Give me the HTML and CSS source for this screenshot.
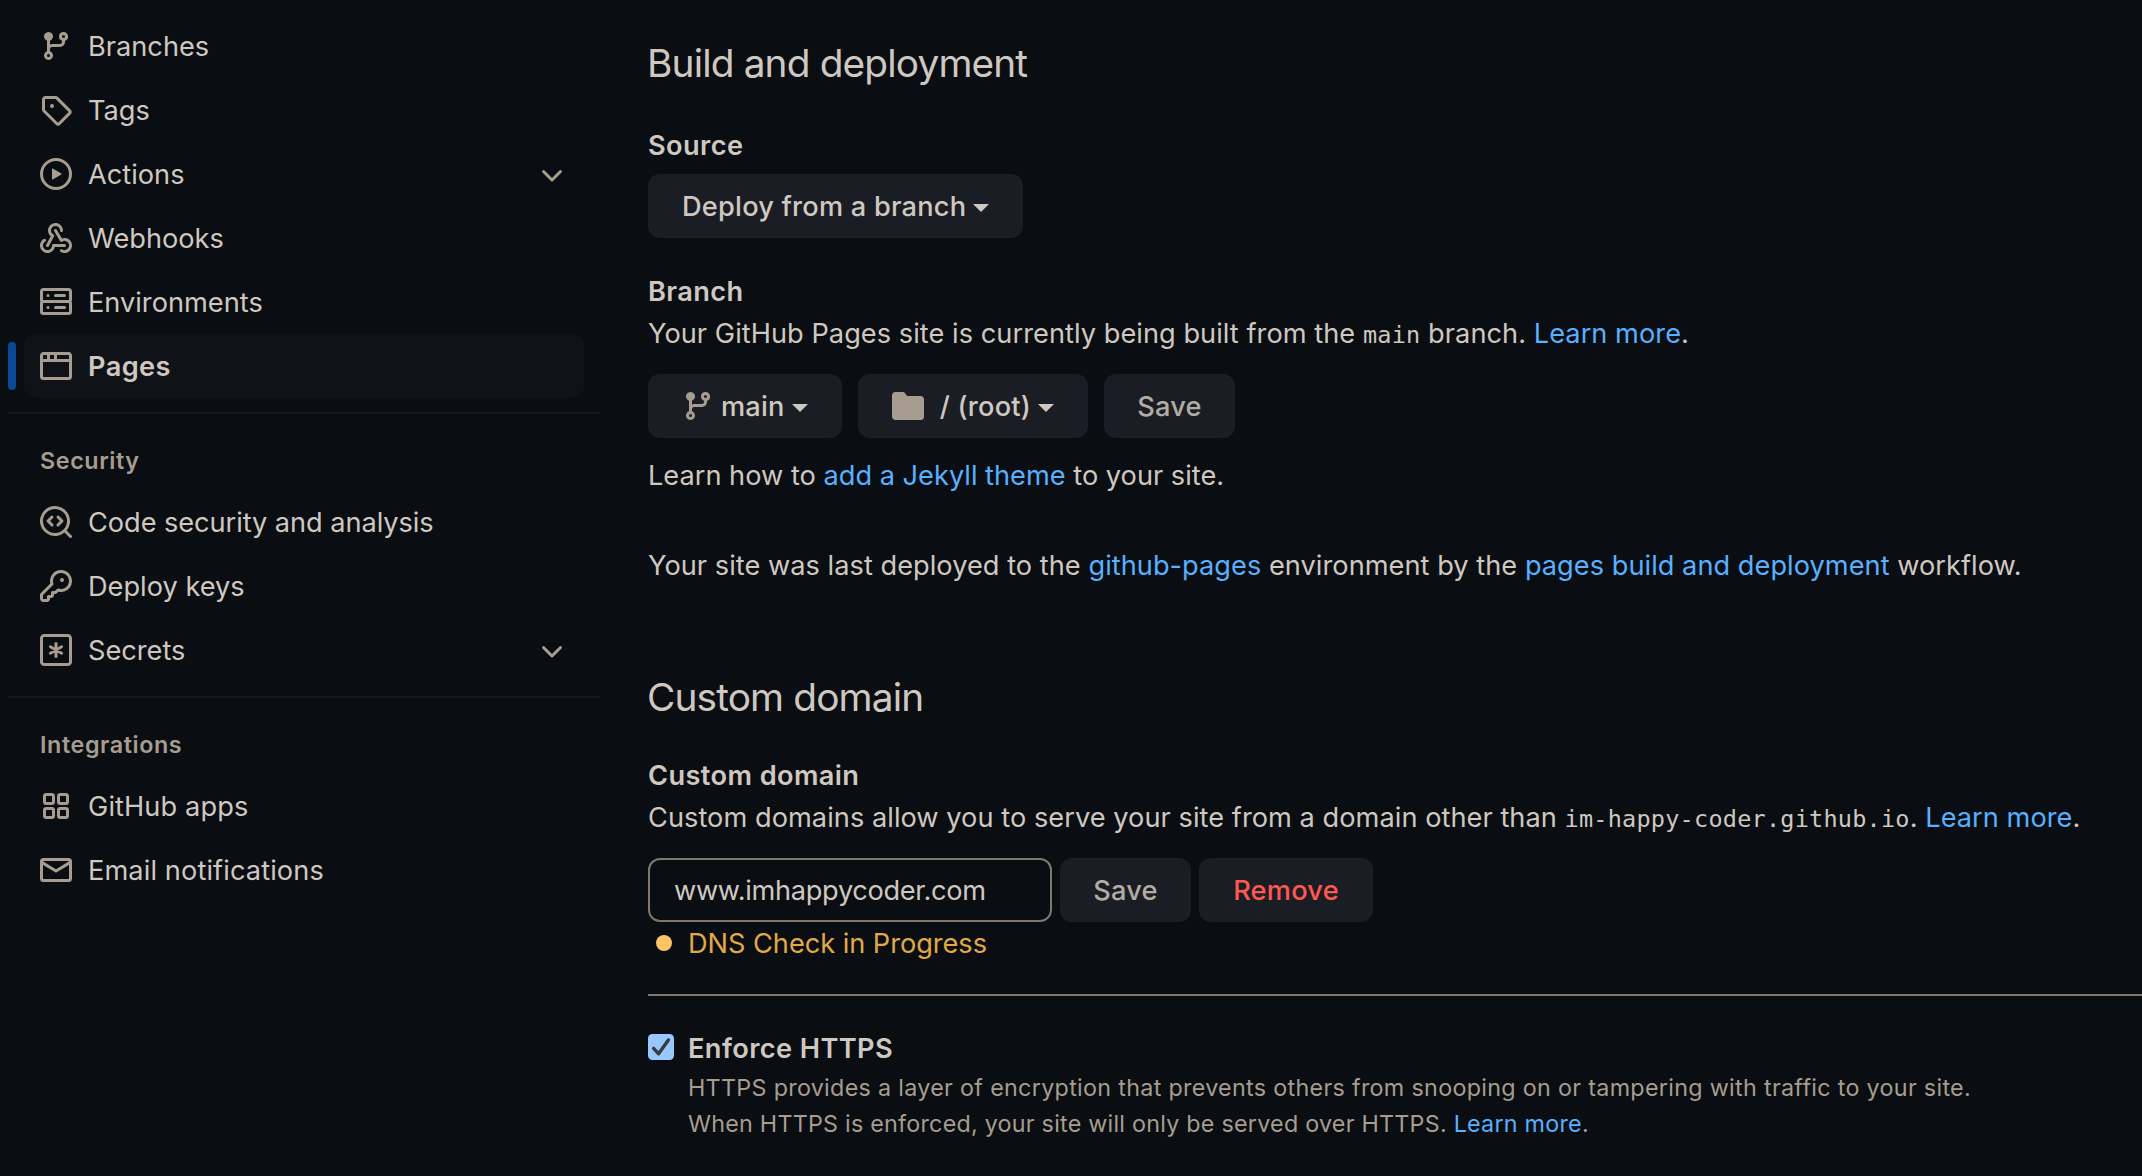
FILE: index.html
```html
<!DOCTYPE html>
<html lang="en">
<head>
<meta charset="utf-8">
<title>Pages settings</title>
<link rel="stylesheet" href="styles.css">
</head>
<body>
<div class="page">
  <nav class="sidebar">
    <ul class="nav-list">
      <li class="nav-item"><svg class="icon" viewBox="0 0 16 16"><path d="M11.75 2.5a.75.75 0 100 1.5.75.75 0 000-1.5zm-2.25.75a2.25 2.25 0 113 2.122V6A2.5 2.5 0 0110 8.5H6a1 1 0 00-1 1v1.128a2.251 2.251 0 11-1.5 0V5.372a2.25 2.25 0 111.5 0v1.836A2.492 2.492 0 016 7h4a1 1 0 001-1v-.628A2.25 2.25 0 019.5 3.25zM4.25 12a.75.75 0 100 1.5.75.75 0 000-1.5zM3.5 3.25a.75.75 0 111.5 0 .75.75 0 01-1.5 0z"/></svg><span>Branches</span></li>
      <li class="nav-item"><svg class="icon" viewBox="0 0 16 16"><path fill-rule="evenodd" d="M2.5 7.775V2.75a.25.25 0 01.25-.25h5.025a.25.25 0 01.177.073l6.25 6.25a.25.25 0 010 .354l-5.025 5.025a.25.25 0 01-.354 0l-6.25-6.25a.25.25 0 01-.073-.177zm-1.5 0V2.75C1 1.784 1.784 1 2.75 1h5.025c.464 0 .91.184 1.238.513l6.25 6.25a1.75 1.75 0 010 2.474l-5.026 5.026a1.75 1.75 0 01-2.474 0l-6.25-6.25A1.75 1.75 0 011 7.775zM6 5a1 1 0 100 2 1 1 0 000-2z"/></svg><span>Tags</span></li>
      <li class="nav-item"><svg class="icon" viewBox="0 0 16 16"><path d="M1.5 8a6.5 6.5 0 1113 0 6.5 6.5 0 01-13 0zM8 0a8 8 0 100 16A8 8 0 008 0zM6.379 5.227A.25.25 0 006 5.442v5.117a.25.25 0 00.379.214l4.264-2.559a.25.25 0 000-.428L6.379 5.227z"/></svg><span>Actions</span><svg class="icon chevron" viewBox="0 0 16 16"><path d="M12.78 6.22a.75.75 0 010 1.06l-4.25 4.25a.75.75 0 01-1.06 0L3.22 7.28a.75.75 0 011.06-1.06L8 9.94l3.72-3.72a.75.75 0 011.06 0z"/></svg></li>
      <li class="nav-item"><svg class="icon" viewBox="0 0 16 16"><path d="M5.5 4.25a2.25 2.25 0 014.5 0 .75.75 0 001.5 0 3.75 3.75 0 10-6.14 2.889l-2.272 4.258a.75.75 0 001.324.706L7 7.25a.75.75 0 00-.309-1.015A2.25 2.25 0 015.5 4.25z"/><path d="M7.364 3.607a.75.75 0 011.03.257l2.608 4.349a3.75 3.75 0 11-.628 6.785.75.75 0 01.752-1.299 2.25 2.25 0 10-.033-3.88.75.75 0 01-1.03-.256L7.107 4.636a.75.75 0 01.257-1.03z"/><path d="M2.9 8.776A.75.75 0 012.625 9.8 2.25 2.25 0 106 11.75a.75.75 0 01.75-.751h5.5a.75.75 0 010 1.5H7.425a3.751 3.751 0 11-5.55-3.998.75.75 0 011.024.274z"/></svg><span>Webhooks</span></li>
      <li class="nav-item"><svg class="icon line" viewBox="0 0 16 16"><rect x=".75" y="1.75" width="14.5" height="6" rx="1"/><rect x=".75" y="7.75" width="14.5" height="6" rx="1"/><path d="M4 4.75h.01M7.75 4.75h4.5M4 10.75h.01M7.75 10.75h4.5"/></svg><span>Environments</span></li>
      <li class="nav-item selected"><svg class="icon" viewBox="0 0 16 16"><path d="M0 2.75C0 1.784.784 1 1.75 1h12.5c.966 0 1.75.784 1.75 1.75v10.5A1.75 1.75 0 0114.25 15H1.75A1.75 1.75 0 010 13.25V2.75zm1.75-.25a.25.25 0 00-.25.25V4.5h2v-2H1.75zM5 2.5v2h2v-2H5zm3.5 0v2h6V2.75a.25.25 0 00-.25-.25H8.5zm6 3.5h-13v7.25c0 .138.112.25.25.25h12.5a.25.25 0 00.25-.25V6z"/></svg><span>Pages</span></li>
    </ul>
    <h3 class="group-title">Security</h3>
    <ul class="nav-list">
      <li class="nav-item tight"><svg class="icon" viewBox="0 0 16 16"><path d="M8.47 4.97a.75.75 0 000 1.06L9.94 7.5 8.47 8.97a.75.75 0 101.06 1.06l2-2a.75.75 0 000-1.06l-2-2a.75.75 0 00-1.06 0zM6.53 6.03a.75.75 0 00-1.06-1.06l-2 2a.75.75 0 000 1.06l2 2a.75.75 0 101.06-1.06L5.06 7.5l1.47-1.47z"/><path fill-rule="evenodd" d="M12.246 13.307a7.5 7.5 0 111.06-1.06l2.474 2.473a.75.75 0 11-1.06 1.06l-2.474-2.473zM1.5 7.5a6 6 0 1112 0 6 6 0 01-12 0z"/></svg><span>Code security and analysis</span></li>
      <li class="nav-item"><svg class="icon" viewBox="0 0 16 16"><path fill-rule="evenodd" d="M6.5 5.5a4 4 0 112.731 3.795.75.75 0 00-.768.18L7.44 10.5H6.25a.75.75 0 00-.75.75v1.19l-.06.06H4.25a.75.75 0 00-.75.75v1.19l-.06.06H1.75a.25.25 0 01-.25-.25v-1.69l5.024-5.023a.75.75 0 00.181-.768A3.995 3.995 0 016.5 5.5zm4-5.5a5.5 5.5 0 00-5.348 6.788L.22 11.72a.75.75 0 00-.22.53v2C0 15.216.784 16 1.75 16h2a.75.75 0 00.53-.22l.5-.5a.75.75 0 00.22-.53V14h.75a.75.75 0 00.53-.22l.5-.5a.75.75 0 00.22-.53V12h.75a.75.75 0 00.53-.22l.932-.932A5.5 5.5 0 1010.5 0zm.5 6a1 1 0 100-2 1 1 0 000 2z"/></svg><span>Deploy keys</span></li>
      <li class="nav-item"><svg class="icon line" viewBox="0 0 16 16"><rect x=".75" y=".75" width="14.5" height="14.5" rx="1.4"/><path d="M8 4.75v6.5M5.2 6.4l5.6 3.2M5.2 9.6l5.6-3.2"/></svg><span>Secrets</span><svg class="icon chevron" viewBox="0 0 16 16"><path d="M12.78 6.22a.75.75 0 010 1.06l-4.25 4.25a.75.75 0 01-1.06 0L3.22 7.28a.75.75 0 011.06-1.06L8 9.94l3.72-3.72a.75.75 0 011.06 0z"/></svg></li>
    </ul>
    <h3 class="group-title">Integrations</h3>
    <ul class="nav-list">
      <li class="nav-item loose"><svg class="icon line" viewBox="0 0 16 16"><rect x="2.25" y="2.25" width="4.5" height="4.5" rx=".9"/><rect x="9.25" y="2.25" width="4.5" height="4.5" rx=".9"/><rect x="2.25" y="9.25" width="4.5" height="4.5" rx=".9"/><rect x="9.25" y="9.25" width="4.5" height="4.5" rx=".9"/></svg><span>GitHub apps</span></li>
      <li class="nav-item loose"><svg class="icon line" viewBox="0 0 16 16"><rect x=".75" y="2.75" width="14.5" height="10.5" rx="1"/><path d="M.9 4.2L8 8.5l7.1-4.3"/></svg><span>Email notifications</span></li>
    </ul>
  </nav>

  <main class="content">
    <section class="build">
      <h2 class="title">Build and deployment</h2>
      <h4 class="label source">Source</h4>
      <button class="btn menu"><span>Deploy from a branch</span><i class="caret"></i></button>
      <h4 class="label branch">Branch</h4>
      <p class="text">Your GitHub Pages site is currently being built from the <code>main</code> branch. <a>Learn more</a>.</p>
      <div class="branch-row">
        <button class="btn menu"><svg class="icon" viewBox="0 0 16 16"><path d="M11.75 2.5a.75.75 0 100 1.5.75.75 0 000-1.5zm-2.25.75a2.25 2.25 0 113 2.122V6A2.5 2.5 0 0110 8.5H6a1 1 0 00-1 1v1.128a2.251 2.251 0 11-1.5 0V5.372a2.25 2.25 0 111.5 0v1.836A2.492 2.492 0 016 7h4a1 1 0 001-1v-.628A2.25 2.25 0 019.5 3.25zM4.25 12a.75.75 0 100 1.5.75.75 0 000-1.5zM3.5 3.25a.75.75 0 111.5 0 .75.75 0 01-1.5 0z"/></svg><span>main</span><i class="caret"></i></button>
        <button class="btn menu folder"><svg class="icon" viewBox="0 0 16 16"><path d="M1.75 1A1.75 1.75 0 000 2.75v10.5C0 14.216.784 15 1.75 15h12.5A1.75 1.75 0 0016 13.25v-8.5A1.75 1.75 0 0014.25 3h-6.5a.25.25 0 01-.2-.1l-.9-1.2c-.33-.44-.85-.7-1.4-.7h-3.5z"/></svg><span>/ (root)</span><i class="caret"></i></button>
        <button class="btn save"><span>Save</span></button>
      </div>
      <p class="text jekyll">Learn how to <a>add a Jekyll theme</a> to your site.</p>
      <p class="text deployed">Your site was last deployed to the <a>github-pages</a> environment by the <a>pages build and deployment</a> workflow.</p>
    </section>

    <section class="domain">
      <h2 class="title">Custom domain</h2>
      <h4 class="label domain-label">Custom domain</h4>
      <p class="text">Custom domains allow you to serve your site from a domain other than <code>im-happy-coder.github.io</code>. <a>Learn more</a>.</p>
      <div class="domain-row">
        <div class="field"><span class="field-value">www.imhappycoder.com</span></div>
        <button class="btn save"><span>Save</span></button>
        <button class="btn remove"><span>Remove</span></button>
      </div>
      <p class="dns"><i class="dot"></i><span>DNS Check in Progress</span></p>
    </section>

    <section class="https">
      <svg class="checkbox" viewBox="0 0 26 26"><rect width="26" height="26" rx="4.5" fill="#99c8ff"/><path d="M5.6 14.4l5 5.4L20.4 6" fill="none" stroke="#3a3a3c" stroke-width="3.4" stroke-linecap="round" stroke-linejoin="round"/></svg>
      <div>
        <h4 class="label">Enforce HTTPS</h4>
        <p class="note">HTTPS provides a layer of encryption that prevents others from snooping on or tampering with traffic to your site.</p>
        <p class="note second">When HTTPS is enforced, your site will only be served over HTTPS. <a>Learn more</a>.</p>
      </div>
    </section>
  </main>
</div>
</body>
</html>
```
FILE: styles.css
```css
* { box-sizing: border-box; }

body {
  margin: 0;
  background: #0a0d11;
  color: #cfc8c1;
  font: 400 27.2px/42px Inter, "Liberation Sans", sans-serif;
  letter-spacing: 0.04px;
  overflow: hidden;
}

h2, h3, h4, p, ul { margin: 0; padding: 0; }
a { color: #58b0ff; }
code {
  font: 23.5px/1 "DejaVu Sans Mono", monospace;
  letter-spacing: 0.23px;
}

.page {
  display: grid;
  grid-template-columns: 592px 1494px;
  column-gap: 48px;
  width: 2142px;
  height: 1176px;
  padding-left: 8px;
  overflow: hidden;
}

.icon { width: 32px; height: 32px; flex: none; fill: #a69d90; }
.line { fill: none; stroke: #a69d90; stroke-width: 1.5; stroke-linecap: round; }

/* Sidebar */
.sidebar { padding-top: 14px; }
.nav-list { list-style: none; padding: 0 16px 14px; }
.nav-item {
  position: relative;
  display: flex;
  align-items: center;
  gap: 16px;
  height: 64px;
  padding: 0 16px;
  border-radius: 12px;
  white-space: nowrap;
  letter-spacing: 0;
}
.nav-item span, .btn span { padding-top: 2px; }
.tight { letter-spacing: -0.06px; }
.loose { letter-spacing: 0.1px; }
.chevron { margin-left: auto; }
.selected { background: #0f1217; font-weight: 600; letter-spacing: 0.4px; }
.selected::before {
  content: "";
  position: absolute;
  left: -16px;
  top: 8px;
  width: 8px;
  height: 48px;
  border-radius: 4px;
  background: #0a4a95;
}
.group-title {
  height: 78px;
  padding: 29px 32px 0;
  border-top: 2px solid #15191c;
  color: #a69d90;
  font-size: 23.3px;
  font-weight: 600;
  line-height: 36px;
  letter-spacing: 0.6px;
}

/* Main column */
.content { padding-top: 33px; white-space: nowrap; }
.title {
  margin-left: -1px;
  font-size: 38.8px;
  font-weight: 400;
  line-height: 60px;
  letter-spacing: -0.85px;
}
.label { font-size: 27.2px; font-weight: 600; letter-spacing: 0.4px; }
.source { margin: 32px 0 7px; }
.branch { margin-top: 33px; }

.btn {
  display: flex;
  align-items: center;
  justify-content: center;
  height: 64px;
  padding: 0;
  border: 2px solid #172027;
  border-radius: 12px;
  background: #1b1d25;
  color: inherit;
  font: 500 27.2px/42px Inter, "Liberation Sans", sans-serif;
  letter-spacing: 0.22px;
}
.menu { gap: 7px; padding: 0 32px; }
.folder .icon { margin-right: 9px; }
.caret {
  border: 8px solid transparent;
  border-top-color: #cfc8c1;
  border-bottom: 0;
  margin-top: 4px;
}
.save { width: 131px; color: #b3aca3; }
.remove { width: 174px; color: #ff5751; }

.branch-row { display: flex; gap: 16px; margin: 19px 0 17px; }
.jekyll { letter-spacing: 0; }
.deployed { margin-top: 48px; letter-spacing: 0.03px; }

.domain { margin-top: 80px; }
.domain-label { margin-top: 28px; }
.domain-row { display: flex; gap: 8px; margin-top: 19px; }
.field {
  width: 404px;
  height: 64px;
  padding: 10px 64px 8px 24px;
  border: 2px solid #80786b;
  border-radius: 12px;
}
.field-value { display: block; overflow: hidden; letter-spacing: -0.32px; }
.dns { display: flex; align-items: center; gap: 16px; height: 42px; padding-left: 8px; color: #e0aa45; letter-spacing: -0.04px; }
.dns span { padding-top: 2px; }
.dot { width: 16px; height: 16px; border-radius: 50%; background: #fdc465; }

.https { display: flex; gap: 14px; margin-top: 30px; padding-top: 32px; border-top: 2px solid #80786b; }
.checkbox { width: 26px; height: 26px; margin-top: 6px; flex: none; }
.note { color: #a69d90; font-size: 23.3px; line-height: 36px; letter-spacing: 0.31px; }
.second { letter-spacing: 0.24px; }
```
